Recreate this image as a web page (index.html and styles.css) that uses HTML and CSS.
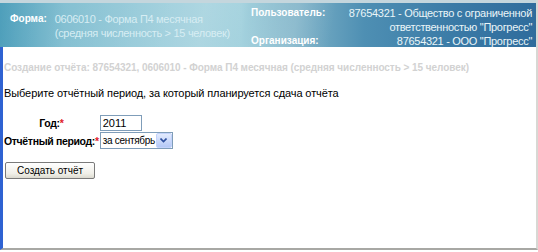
FILE: index.html
```html
<!doctype html>
<html lang="ru">
  <head>
    <meta charset="utf-8" />
    <title>Создание отчёта</title>
    <link rel="stylesheet" href="styles.css">
  </head>
  <body>
    <div class="window">
      <div class="topline"></div>
      <header class="banner">
        <div class="form-info">
          <span class="label">Форма:</span>
          <span class="value">0606010 - Форма П4 месячная<br>(средняя численность &gt; 15 человек)</span>
        </div>
        <div class="user-info">
          <span class="label">Пользователь:</span>
          <span class="value">87654321 - Общество с ограниченной<br>ответственностью "Прогресс"</span>
          <span class="label">Организация:</span>
          <span class="value">87654321 - ООО "Прогресс"</span>
        </div>
      </header>

      <main class="content">
        <h2 class="title">Создание отчёта: 87654321, 0606010 - Форма П4 месячная (средняя численность &gt; 15 человек)</h2>
        <p class="hint">Выберите отчётный период, за который планируется сдача отчёта</p>

        <div class="fields">
          <label class="field-label" for="year">Год:<span class="req">*</span></label>
          <input class="year" id="year" type="text" value="2011">
          <label class="field-label" for="period">Отчётный период:<span class="req">*</span></label>
          <div class="select">
            <span class="select-text">за сентябрь</span>
            <span class="select-btn">
              <svg width="7" height="5" viewBox="0 0 7 5">
                <path d="M0.5 0.5 L3.5 3.5 L6.5 0.5" fill="none" stroke="#2d4f9e" stroke-width="1.6" />
              </svg>
            </span>
          </div>
        </div>

        <button class="submit" type="button">Создать отчёт</button>
      </main>
    </div>
  </body>
</html>
```

FILE: styles.css
```css
:root {
  --frame-blue: #2f62d2;
  --muted: #d2d2d2;
  --label-font: 'Liberation Sans', Arial, sans-serif;
}

html,
body {
  margin: 0;
  padding: 0;
  height: 100%;
}

body {
  font-family: var(--label-font);
  background: #ffffff;
  color: #000000;
}

.window {
  height: 250px;
  box-sizing: border-box;
  border-left: 3px solid var(--frame-blue);
  border-right: 2px solid #d8d8d4;
  border-bottom: 2px solid #a8a8a4;
  display: flex;
  flex-direction: column;
}

.topline {
  height: 3px;
  margin-left: -3px;
  background: #c4d6dd;
}

.banner {
  height: 44px;
  margin-left: -3px;
  box-sizing: border-box;
  padding: 0 4px 0 10px;
  display: flex;
  justify-content: space-between;
  background:
    linear-gradient(
      100deg,
      transparent 0%,
      rgba(255, 255, 255, 0.18) 38%,
      transparent 46%,
      rgba(255, 255, 255, 0.12) 55%,
      transparent 62%
    ),
    linear-gradient(
      90deg,
      #4e9fbb 0%,
      #7dbccf 12%,
      #93c9d8 30%,
      #a4d2de 45%,
      #7fb3c8 55%,
      #4e8fb3 68%,
      #3a7aa6 85%,
      #2f6c9c 100%
    );
  color: #ffffff;
}

.banner .label {
  font-weight: bold;
  font-size: 10px;
  color: #ffffff;
  white-space: nowrap;
}

.banner .value {
  font-size: 11px;
  line-height: 14px;
  letter-spacing: -0.3px;
  white-space: nowrap;
}

.form-info {
  display: flex;
  gap: 8px;
  padding-top: 9px;
}

.form-info .label {
  line-height: 14px;
}

.form-info .value {
  color: #d7edf3;
}

.user-info {
  width: 281px;
  display: grid;
  grid-template-columns: auto 1fr;
  align-content: start;
  padding-top: 3px;
}

.user-info .label {
  line-height: 14px;
}

.user-info .value {
  text-align: right;
  color: #eaf5f8;
}

.content {
  padding: 0 1px;
}

.title {
  margin: 15px 0 0;
  font-size: 10px;
  font-weight: bold;
  letter-spacing: -0.05px;
  color: var(--muted);
  white-space: nowrap;
}

.hint {
  margin: 14px 0 0;
  font-size: 11px;
  letter-spacing: -0.1px;
}

.fields {
  margin-top: 16px;
  display: grid;
  grid-template-columns: auto auto;
  justify-content: start;
  align-items: center;
  column-gap: 1px;
  row-gap: 1px;
}

.field-label {
  text-align: center;
  font-size: 10.5px;
  font-weight: bold;
  letter-spacing: -0.35px;
  white-space: nowrap;
}

.req {
  color: #e0202a;
}

.year {
  width: 42px;
  height: 16px;
  box-sizing: border-box;
  margin: 0;
  padding: 0 2px;
  border: 1px solid #7f9db9;
  font-family: var(--label-font);
  font-size: 11px;
}

.select {
  width: 73px;
  height: 17px;
  box-sizing: border-box;
  border: 1px solid #7f9db9;
  display: flex;
  align-items: center;
  font-size: 10px;
  letter-spacing: -0.3px;
  white-space: nowrap;
}

.select-text {
  flex: 1;
  padding-left: 2px;
}

.select-btn {
  width: 16px;
  height: 15px;
  box-sizing: border-box;
  border: 1px solid #c3d3fb;
  border-radius: 2px;
  background: linear-gradient(#e3ebfe, #b4c8f6);
  display: flex;
  align-items: center;
  justify-content: center;
}

.submit {
  margin: 13px 0 0 1px;
  width: 90px;
  height: 17px;
  padding: 0;
  border: 1px solid #7a7a7a;
  border-radius: 2px;
  background: linear-gradient(#ffffff, #f0efe8 70%, #dcdad0);
  font-family: var(--label-font);
  font-size: 10px;
  color: #000000;
}
```
